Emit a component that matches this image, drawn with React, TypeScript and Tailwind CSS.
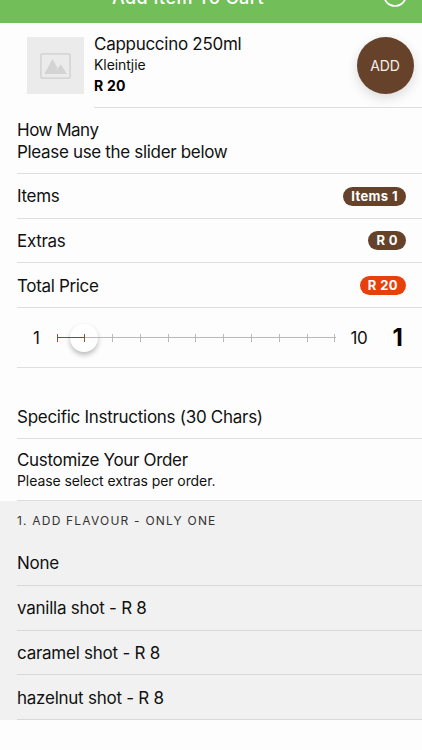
import React, { useState } from 'react';

const MAX_ITEMS = 10;
const flavours = ['None', 'vanilla shot - R 8', 'caramel shot - R 8', 'hazelnut shot - R 8'];

const Badge: React.FC<{ color: string; children: React.ReactNode }> = ({ color, children }) => (
  <span className={`${color} h-[19px] px-[8px] rounded-full text-white text-[13px] leading-[19px] font-bold tracking-[0.4px]`}>
    {children}
  </span>
);

const Slider: React.FC<{ value: number; onChange: (v: number) => void }> = ({ value, onChange }) => {
  const percent = (value / MAX_ITEMS) * 100;

  return (
    <div className="relative w-[279px] h-7 flex items-center justify-between">
      {/* Knob */}
      <div
        className="absolute top-0 w-7 h-7 -ml-3.5 rounded-full bg-white shadow-[0_3px_5px_rgba(0,0,0,0.26)]"
        style={{ left: `${percent}%` }}
      ></div>
      {/* Track */}
      <div className="absolute left-0 right-0 top-[13px] h-px bg-[#b9b9b9]"></div>
      <div className="absolute left-0 top-[13px] h-px bg-[#93431f]" style={{ width: `${percent}%` }}></div>
      {Array.from({ length: MAX_ITEMS + 1 }, (_, i) => (
        <button
          key={i}
          aria-label={`${i}`}
          onClick={() => onChange(Math.max(1, i))}
          className={`relative w-px h-2 ${i <= value ? 'bg-[#7d5848]' : 'bg-[#b9b9b9]'}`}
        ></button>
      ))}
    </div>
  );
};

export default function App() {
  const [count, setCount] = useState(1);

  return (
    <div className="w-full h-[750px] overflow-hidden bg-[#fdfdfd] text-[#111] font-['Inter',sans-serif] text-[17px] leading-[22px] tracking-[-0.33px]">
      {/* Header */}
      <header className="relative h-[23px] bg-[#72bf59] flex items-end justify-center">
        <h1 className="text-[18px] leading-[22px] font-medium text-white tracking-[0.45px] mb-[14px] -ml-[46px]">Add Item To Cart</h1>
        <svg className="absolute right-[15px] -top-[17px]" width="24" height="24" viewBox="0 0 24 24" fill="none" stroke="#fff" strokeWidth="1.7">
          <circle cx="12" cy="12" r="11" />
        </svg>
      </header>

      {/* Product */}
      <section className="flex pl-[27px] h-[85px]">
        <div className="w-[57px] h-[57px] mt-[14px] bg-[#ebebeb] flex items-center justify-center shrink-0">
          <svg width="31" height="26" viewBox="0 0 31 26" fill="none">
            <rect x="0.9" y="0.9" width="29.2" height="24.2" rx="1.6" stroke="#d6d6d6" strokeWidth="1.8" />
            <path d="M4.3 21 L12.5 6 L17.7 15.2 L21 11.5 L26.8 21 Z" fill="#d3d3d3" />
            <path d="M16.6 17 L17.7 15.2" stroke="#ebebeb" strokeWidth="0.6" />
          </svg>
        </div>
        <div className="ml-[10px] flex-1 flex border-b border-[#dedede]">
          <div className="pt-[10px]">
            <div className="leading-[22px] tracking-[-0.28px]">Cappuccino 250ml</div>
            <div className="text-[14px] leading-[20px] tracking-[-0.08px]">Kleintjie</div>
            <div className="text-[14px] leading-[22px] font-bold text-black tracking-[0.2px]">R 20</div>
          </div>
          <button className="w-[57px] h-[57px] mt-[14px] mr-[8px] ml-auto rounded-full bg-[#67422b] text-[#f5efeb] text-[14px] tracking-[-0.2px] shadow-[0_4px_12px_rgba(0,0,0,0.14)]">
            <span className="mr-px">ADD</span>
          </button>
        </div>
      </section>

      <section className="pl-[17px]">
        <div className="h-[66px] pt-[11px] border-b border-[#dedede]">
          <div className="tracking-[-0.5px]">How Many</div>
          <div>Please use the slider below</div>
        </div>
        <div className="h-[45px] pr-4 flex items-center justify-between border-b border-[#dedede]">
          Items <Badge color="bg-[#67422b]">Items {count}</Badge>
        </div>
        <div className="h-[44px] pr-4 flex items-center justify-between border-b border-[#dedede]">
          Extras <Badge color="bg-[#67422b]">R 0</Badge>
        </div>
        <div className="h-[45px] pt-px pr-4 flex items-center justify-between border-b border-[#dedede]">
          Total Price <Badge color="bg-[#e8400c]">R {count * 20}</Badge>
        </div>
        <div className="h-[60px] flex items-center border-b border-[#dedede]">
          <span className="w-[39.5px] pl-4">1</span>
          <Slider value={count} onChange={setCount} />
          <span className="ml-[15px] w-[42px]">{MAX_ITEMS}</span>
          <span className="text-[24px] font-bold text-black">{count}</span>
        </div>
        <div className="h-[71px] pt-[38px] border-b border-[#dedede] tracking-[-0.28px]">Specific Instructions (30 Chars)</div>
        <div className="h-[62px] pt-[10px] border-b border-[#dedede]">
          <div>Customize Your Order</div>
          <div className="text-[14px] leading-[20px] tracking-[-0.08px]">Please select extras per order.</div>
        </div>
      </section>

      {/* Flavours */}
      <section className="pl-[17px] bg-[#f1f1f1]">
        <h2 className="h-[40px] text-[12px] leading-[40px] tracking-[1.2px] text-[#333]">1. ADD FLAVOUR - ONLY ONE</h2>
        {flavours.map((flavour) => (
          <div key={flavour} className="h-[44.75px] pt-px flex items-center border-b border-[#d8d8da] tracking-[-0.25px]">{flavour}</div>
        ))}
      </section>
    </div>
  );
}
